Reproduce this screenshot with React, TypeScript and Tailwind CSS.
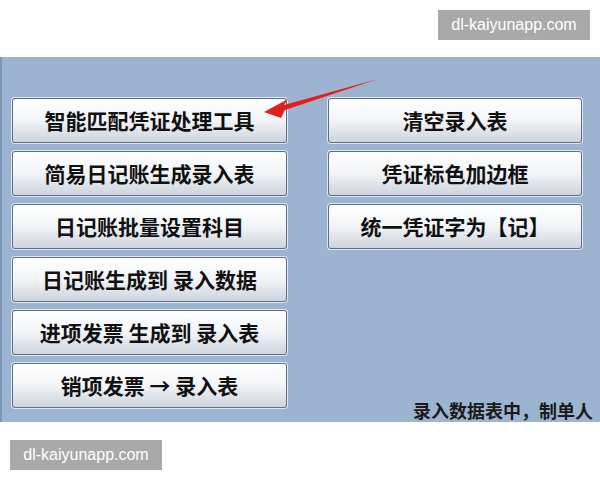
import React from "react";

const leftButtons = [
  "智能匹配凭证处理工具",
  "简易日记账生成录入表",
  "日记账批量设置科目",
  "日记账生成到 录入数据",
  "进项发票 生成到 录入表",
  "销项发票 → 录入表",
];

const rightButtons = ["清空录入表", "凭证标色加边框", "统一凭证字为【记】"];

const cjk = { fontFamily: '"Noto Sans CJK SC", "Noto Sans", sans-serif' };

function ToolButton({ label }: { label: string }) {
  return (
    <button
      style={cjk}
      className="h-[45px] w-full rounded-[3px] border border-[#5f6f86] bg-gradient-to-b from-white via-[#f2f4f7] to-[#cdd4de] text-[21px] font-bold leading-none text-[#111111] shadow-[0_0_0_1px_#dde6f1,inset_0_1px_0_#ffffff] whitespace-nowrap"
    >
      {label}
    </button>
  );
}

function Watermark() {
  return (
    <div
      style={{ fontFamily: '"Liberation Sans", Arial, sans-serif' }}
      className="flex h-[30px] w-[152px] items-center justify-center bg-[#a9a9a9] text-[16px] text-white"
    >
      dl-kaiyunapp.com
    </div>
  );
}

export default function App() {
  return (
    <div className="relative flex h-[480px] w-[600px] flex-col overflow-hidden bg-white">
      <div className="flex h-[57px] justify-end pr-[10px] pt-[10px]">
        <Watermark />
      </div>

      <div className="flex h-[365px] overflow-hidden border-l-2 border-[#7d96b6] bg-[#9cb4d0] pt-[41px]">
        <div className="ml-[10px] flex w-[275px] shrink-0 flex-col gap-[8px]">
          {leftButtons.map((b) => (
            <ToolButton key={b} label={b} />
          ))}
        </div>
        <div className="ml-[41px] flex min-w-0 flex-1 flex-col justify-between pb-[3px]">
          <div className="flex w-[254px] flex-col gap-[8px]">
            {rightButtons.map((b) => (
              <ToolButton key={b} label={b} />
            ))}
          </div>
          <div
            style={cjk}
            className="ml-[85px] whitespace-nowrap text-[18px] font-bold leading-none text-[#1a1a1a]"
          >
            录入数据表中，制单人
          </div>
        </div>
      </div>

      <div className="pl-[10px] pt-[18px]">
        <Watermark />
      </div>

      {/* red pointer arrow */}
      <svg
        className="pointer-events-none absolute left-0 top-0"
        width="600"
        height="480"
        viewBox="0 0 600 480"
      >
        <polygon
          points="264,112 288,99 284,105 378,79 285,110 281,118"
          fill="#e0201c"
        />
      </svg>
    </div>
  );
}
